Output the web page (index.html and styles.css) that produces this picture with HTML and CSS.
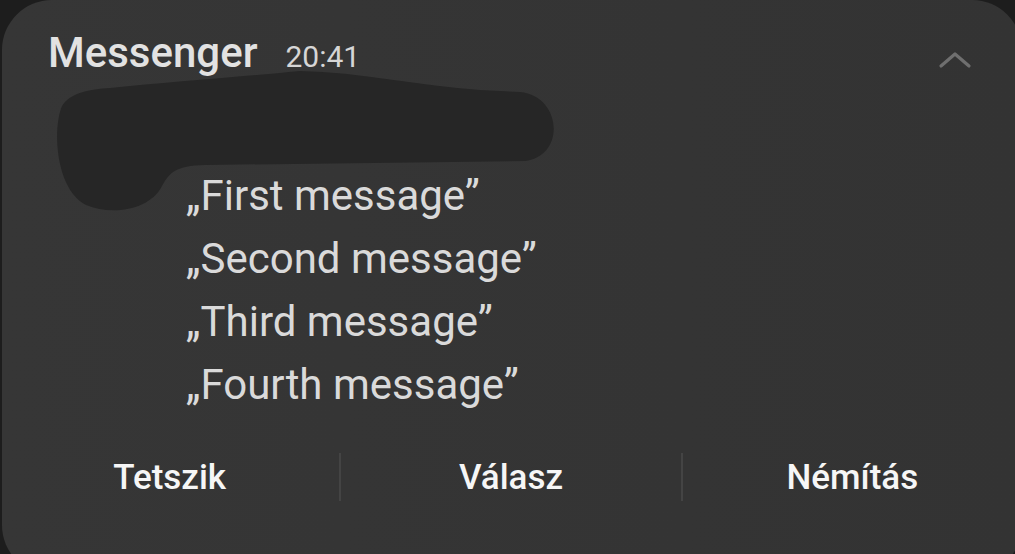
FILE: index.html
```html
<!DOCTYPE html>
<html lang="en">
<head>
    <meta charset="UTF-8">
    <meta name="viewport" content="width=device-width, initial-scale=1.0">
    <title>Messenger notification</title>
    <link rel="stylesheet" href="styles.css">
</head>
<body>

    <div class="card">
        <div class="header">
            <span class="app-name">Messenger</span>
            <span class="time">20:41</span>
            <svg class="chevron" width="34" height="20" viewBox="0 0 34 20">
                <path d="M3 16 L17 4 L31 16" fill="none" stroke="#6f6f6f" stroke-width="3.2" stroke-linecap="round" stroke-linejoin="round"/>
            </svg>
        </div>

        <div class="messages">
            <p class="message">„First message”</p>
            <p class="message">„Second message”</p>
            <p class="message">„Third message”</p>
            <p class="message">„Fourth message”</p>
        </div>

        <div class="actions">
            <button class="action">Tetszik</button>
            <span class="divider"></span>
            <button class="action">Válasz</button>
            <span class="divider"></span>
            <button class="action">Némítás</button>
        </div>

        <!-- redaction scribble over the sender name -->
        <svg class="scribble" width="600" height="230" viewBox="0 0 600 230">
            <path d="M110 88 C170 82, 240 77, 300 71 C360 72, 420 86, 480 90 L520 92 C562 96, 566 156, 525 161 L205 165 C175 166, 170 172, 162 186 C150 210, 112 216, 86 205 C56 190, 52 130, 62 106 C70 93, 90 89, 110 88 Z" fill="#262626"/>
        </svg>
    </div>

</body>
</html>
```

FILE: styles.css
```css
body {
    margin: 0;
    padding: 0;
    background-color: #1d1d1d;
    font-family: Roboto, "Liberation Sans", sans-serif;
    width: 1015px;
    height: 554px;
    overflow: hidden;
}

.card {
    position: relative;
    box-sizing: border-box;
    margin-left: 2px;
    width: 1020px;
    height: 575px;
    background: linear-gradient(90deg, #363636, #333333);
    border-radius: 50px;
    padding-top: 28px;
}

.header {
    display: flex;
    align-items: baseline;
    padding-left: 46px;
    height: 50px;
}

.app-name {
    font-size: 42px;
    font-weight: 500;
    color: #e2e2e2;
}

.time {
    font-size: 30px;
    color: #d6d6d6;
    margin-left: 28px;
}

.chevron {
    margin-left: auto;
    margin-right: 50px;
    align-self: center;
    margin-top: 14px;
}

.messages {
    padding-left: 184px;
    margin-top: 86px;
}

.message {
    margin: 0;
    font-size: 42px;
    line-height: 63px;
    color: #dadada;
}

.actions {
    display: flex;
    align-items: center;
    margin-top: 36px;
    margin-left: -2px;
    height: 50px;
}

.action {
    flex: 1;
    background: none;
    border: none;
    padding: 0;
    font-family: inherit;
    font-size: 35px;
    font-weight: 500;
    color: #f6f6f6;
}

.divider {
    width: 2px;
    height: 48px;
    background-color: #444444;
}

.scribble {
    position: absolute;
    left: -2px;
    top: 0;
}
```
